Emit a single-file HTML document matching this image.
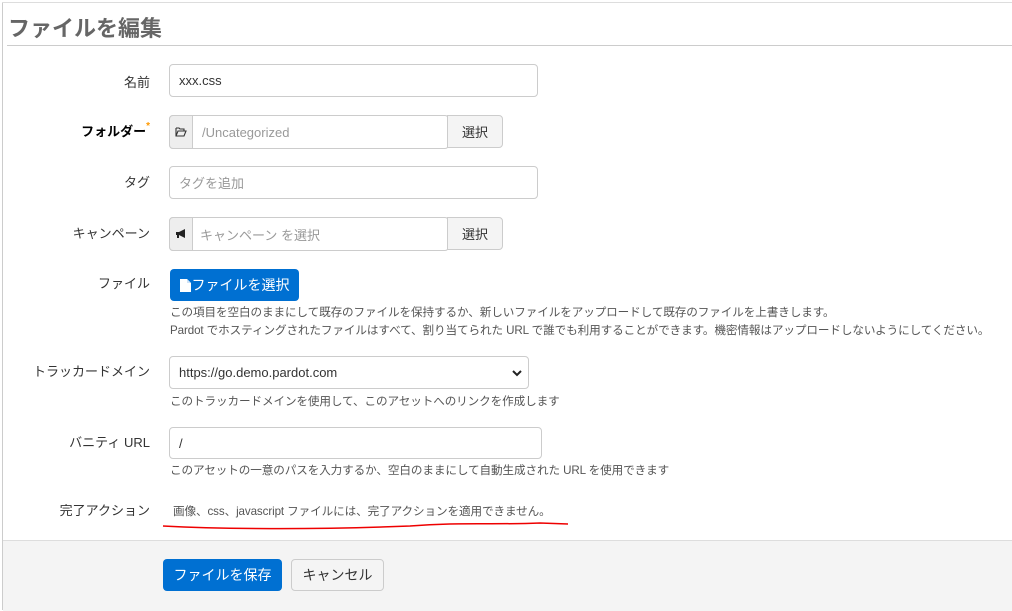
<!DOCTYPE html>
<html><head><meta charset="utf-8"><style>
body{margin:0;width:1012px;height:610px;background:#fff;font-family:"Liberation Sans","Noto Sans CJK JP",sans-serif;font-size:13px;color:#333;position:relative;overflow:hidden}
.a{position:absolute}
.lbl{position:absolute;right:862px;text-align:right;white-space:nowrap;font-size:13px;color:#333}
.inp{position:absolute;box-sizing:border-box;border:1px solid #ccc;border-radius:4px;background:#fff;padding-left:9px;display:flex;align-items:center;font-size:13px}
.ph{color:#999}
.help{position:absolute;left:170px;font-size:11.6px;color:#555;white-space:nowrap;letter-spacing:-0.1px}
.btn{position:absolute;box-sizing:border-box;border-radius:4px;display:flex;align-items:center;justify-content:center;font-size:13px}
</style></head><body>
<div class="a" style="left:2px;top:2px;width:1px;height:608px;background:#ccc"></div>
<div class="a" style="left:2px;top:2px;width:1010px;height:1px;background:#ddd"></div>
<div class="a" style="left:8px;top:11px;font-size:22px;font-weight:bold;color:#666">ファイルを編集</div>
<div class="a" style="left:7px;top:45px;width:1005px;height:1px;background:#ccc"></div>

<div class="lbl" style="top:72px">名前</div>
<div class="inp" style="left:169px;top:64px;width:369px;height:33px">xxx.css</div>

<div class="lbl" style="top:121px;font-weight:bold;color:#000">フォルダー<span style="color:#f90;font-size:10px;vertical-align:top">*</span></div>
<div class="inp" style="left:169px;top:115px;width:280px;height:34px;padding-left:32px"><span class="ph">/Uncategorized</span></div>
<div class="a" style="left:169px;top:115px;width:24px;height:34px;box-sizing:border-box;border:1px solid #ccc;border-radius:4px 0 0 4px;background:#eee;display:flex;align-items:center;justify-content:center"><svg width="12" height="10" viewBox="0 0 12 10"><path d="M1 1H4L5 2H9V4M1 1V9H9L11 4H3L1 9" stroke="#333" stroke-width="1.1" fill="none"/></svg></div>
<div class="btn" style="left:447px;top:115px;width:56px;height:33px;border:1px solid #ccc;background:#f4f4f4;border-radius:0 4px 4px 0">選択</div>

<div class="lbl" style="top:172px">タグ</div>
<div class="inp" style="left:169px;top:166px;width:369px;height:33px"><span class="ph">タグを追加</span></div>

<div class="lbl" style="top:223px">キャンペーン</div>
<div class="inp" style="left:169px;top:217px;width:280px;height:34px;padding-left:30px"><span class="ph">キャンペーン を選択</span></div>
<div class="a" style="left:169px;top:217px;width:24px;height:34px;box-sizing:border-box;border:1px solid #ccc;border-radius:4px 0 0 4px;background:#eee;display:flex;align-items:center;justify-content:center"><svg width="12" height="10" viewBox="0 0 12 10"><path d="M1 3H4L10 0V9L4 6H1Z" fill="#222"/><path d="M2 6V9H4V6" fill="#222"/></svg></div>
<div class="btn" style="left:447px;top:217px;width:56px;height:33px;border:1px solid #ccc;background:#f4f4f4;border-radius:0 4px 4px 0">選択</div>

<div class="lbl" style="top:273px">ファイル</div>
<div class="btn" style="left:170px;top:269px;width:129px;height:32px;background:#0070d2;color:#fff;font-size:14px"><svg width="11" height="13" viewBox="0 0 11 13" style="margin-right:1px"><path d="M0 0H7L11 4V13H0Z" fill="#fff"/><path d="M7 0V4H11" fill="#cfe3f7"/></svg>ファイルを選択</div>
<div class="help" style="top:304px">この項目を空白のままにして既存のファイルを保持するか、新しいファイルをアップロードして既存のファイルを上書きします。</div>
<div class="help" style="top:322px">Pardot でホスティングされたファイルはすべて、割り当てられた URL で誰でも利用することができます。機密情報はアップロードしないようにしてください。</div>

<div class="lbl" style="top:361px">トラッカードメイン</div>
<div class="inp" style="left:169px;top:356px;width:360px;height:33px">https://go.demo.pardot.com<svg class="a" style="right:6px;top:12px" width="10" height="8" viewBox="0 0 10 8"><path d="M1 2L5 6L9 2" stroke="#222" stroke-width="2" fill="none"/></svg></div>
<div class="help" style="top:393px">このトラッカードメインを使用して、このアセットへのリンクを作成します</div>

<div class="lbl" style="top:432px">バニティ URL</div>
<div class="inp" style="left:169px;top:427px;width:373px;height:32px">/</div>
<div class="help" style="top:462px">このアセットの一意のパスを入力するか、空白のままにして自動生成された URL を使用できます</div>

<div class="lbl" style="top:500px">完了アクション</div>
<div class="help" style="left:173px;top:503px">画像、css、javascript ファイルには、完了アクションを適用できません。</div>
<svg class="a" style="left:160px;top:518px" width="412" height="14"><path d="M3 8C60 11 150 12 250 8C300 4 330 7 380 5L408 6" stroke="#e00" stroke-width="1.5" fill="none"/></svg>

<div class="a" style="left:3px;top:540px;width:1009px;height:70px;background:#f4f4f4;border-top:1px solid #ddd"></div>
<div class="btn" style="left:163px;top:559px;width:119px;height:32px;background:#0070d2;color:#fff;font-size:14px">ファイルを保存</div>
<div class="btn" style="left:291px;top:559px;width:93px;height:32px;background:#f4f4f4;border:1px solid #ccc;font-size:14px">キャンセル</div>
</body></html>
